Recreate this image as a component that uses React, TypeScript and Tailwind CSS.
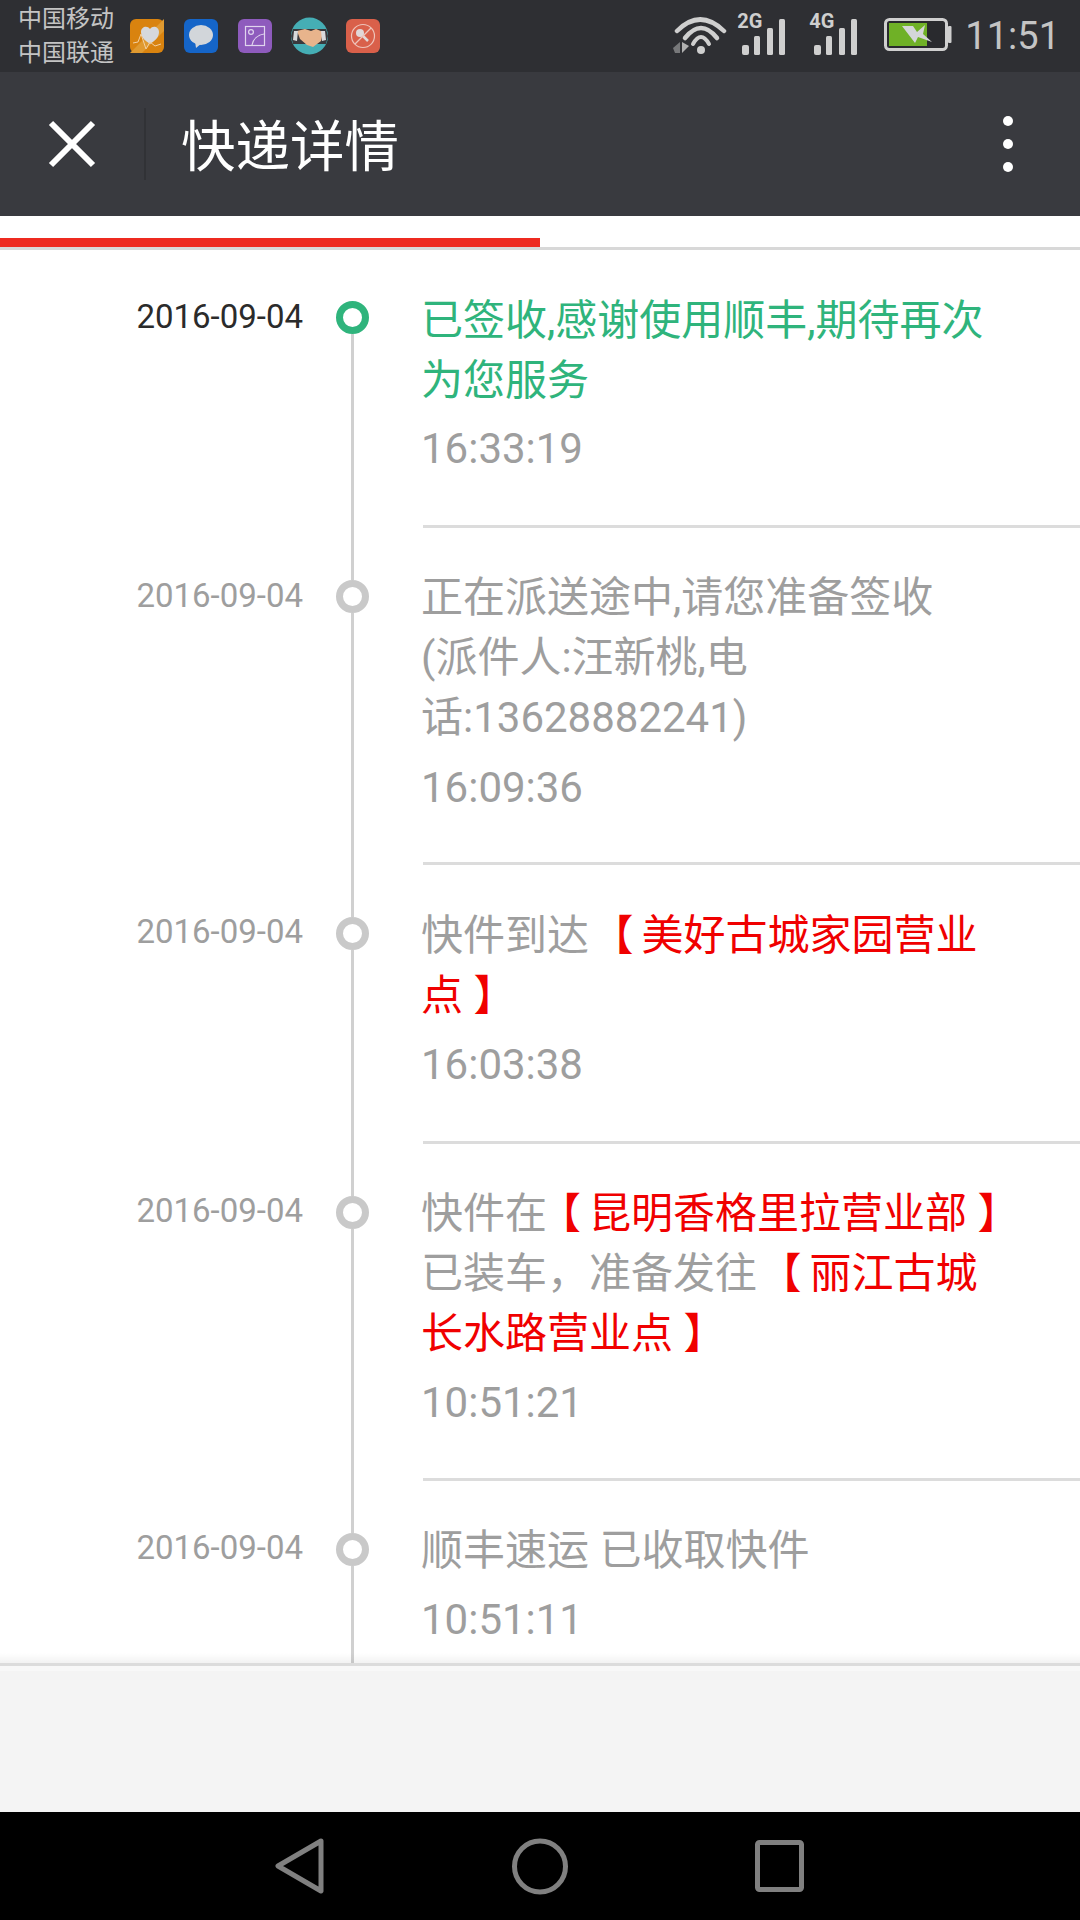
import React from "react";

const font = "font-['Roboto','Noto_Sans_CJK_SC',sans-serif]";

function Bars() {
  return (
    <svg width="43" height="36" viewBox="0 0 43 36" className="block">
      <rect x="0" y="26" width="7" height="10" rx="2" fill="#cfcfcf" />
      <rect x="12" y="17" width="6" height="19" rx="1.5" fill="#cfcfcf" />
      <rect x="25" y="9" width="6" height="27" rx="1.5" fill="#cfcfcf" />
      <rect x="37" y="0" width="6" height="36" rx="1.5" fill="#cfcfcf" />
    </svg>
  );
}

function StatusBar() {
  return (
    <div className={`flex h-[72px] shrink-0 items-center bg-[#2e2f33] ${font}`}>
      <div className="ml-[18px] w-[96px] text-[24px] leading-[34px] text-[#c4c4c4]">
        <div>中国移动</div>
        <div>中国联通</div>
      </div>
      <div className="ml-[16px] flex items-center">
        <svg width="34" height="34" viewBox="0 0 34 34" className="block">
          <rect width="34" height="34" rx="6" fill="#d9830f" />
          <path d="M0 34L34 0v12L12 34z" fill="#e09a30" />
          <path d="M20 25c-4-3-9-6-9-12 0-5 6-7 9-3 3-4 9-2 9 3 0 6-5 9-9 12z" fill="#d6d8dc" />
          <path d="M3 24l5-1 3-8 5 15 4-7 5 4 6-2" fill="none" stroke="#f2cfa0" strokeWidth="1" />
        </svg>
        <svg width="34" height="34" viewBox="0 0 34 34" className="ml-[20px] block">
          <rect width="34" height="34" rx="6" fill="#1565c8" />
          <ellipse cx="17" cy="16" rx="12" ry="10" fill="#d2d6da" />
          <path d="M11 22l1 7 6-5z" fill="#d2d6da" />
        </svg>
        <svg width="34" height="34" viewBox="0 0 34 34" className="ml-[20px] block">
          <rect width="34" height="34" rx="6" fill="#8e5bbd" />
          <rect x="7.5" y="7.5" width="19" height="19" fill="none" stroke="#e0d4ee" strokeWidth="1.2" />
          <circle cx="13" cy="13" r="2.4" fill="none" stroke="#e0d4ee" strokeWidth="1.2" />
          <path d="M14 26c1-6 6-10 12-11" fill="none" stroke="#e0d4ee" strokeWidth="1.2" />
        </svg>
        <svg width="37" height="38" viewBox="0 0 37 38" className="ml-[19px] block">
          <circle cx="18.5" cy="19" r="18.5" fill="#45aeb5" />
          <path d="M2 12h33l2 7-2 8H2l-2-8z" fill="#39393d" />
          <path d="M6 14l8-2 6 2 5-2 7 3-2 9-8 6-6-2-7-6z" fill="#e8b48c" />
          <path d="M3 14l4 0-1 10-4-1zM34 14l-4 0 1 10 4-1z" fill="#d8dadc" />
        </svg>
        <svg width="34" height="34" viewBox="0 0 34 34" className="ml-[18px] block">
          <rect width="34" height="34" rx="6" fill="#d9604a" />
          <circle cx="17" cy="17" r="11.5" fill="none" stroke="#eec4ba" strokeWidth="1.2" />
          <circle cx="14" cy="14" r="4" fill="#e0d8d8" />
          <path d="M16 16l6 6" stroke="#e0d8d8" strokeWidth="2.5" />
          <path d="M25 9L9 25" stroke="#eec4ba" strokeWidth="1.2" />
        </svg>
      </div>
      <div className="ml-auto flex items-center">
        <svg width="54" height="38" viewBox="0 0 54 38" className="block">
          <path d="M4 14Q27 -9 51 14" fill="none" stroke="#cfcfcf" strokeWidth="4.5" strokeLinecap="round" />
          <path d="M12 21Q28 1 44 21" fill="none" stroke="#cfcfcf" strokeWidth="4.5" strokeLinecap="round" />
          <path d="M20 27Q28 13 36 27" fill="none" stroke="#cfcfcf" strokeWidth="4" strokeLinecap="round" />
          <circle cx="28" cy="33" r="4" fill="#cfcfcf" />
          <path d="M0 31l7-6v11H2z" fill="#77787a" />
          <path d="M9 25v11l7-7z" fill="#b0b0b0" />
        </svg>
        <div className="relative mb-[5px] ml-[15px] h-[42px] w-[43px]">
          <span className="absolute left-[-5px] top-[-2px] text-[20px] leading-[20px] font-bold text-[#cfcfcf]">2G</span>
          <div className="absolute bottom-0 left-0"><Bars /></div>
        </div>
        <div className="relative mb-[5px] ml-[29px] h-[42px] w-[43px]">
          <span className="absolute left-[-5px] top-[-2px] text-[20px] leading-[20px] font-bold text-[#cfcfcf]">4G</span>
          <div className="absolute bottom-0 left-0"><Bars /></div>
        </div>
        <svg width="68" height="34" viewBox="0 0 68 34" className="mb-[2px] ml-[27px] block">
          <rect x="1.5" y="1.5" width="61" height="30" rx="4" fill="#292a2e" stroke="#cfcfcf" strokeWidth="3" />
          <rect x="5" y="5" width="38" height="23" fill="#6fb126" />
          <rect x="64" y="8" width="3.5" height="17" rx="1" fill="#cfcfcf" />
          <path d="M18 8h11l4 6 8-7-2 9 9 8-14-5-3 6z" fill="#d4d6d8" />
        </svg>
        <span className="ml-[13px] mr-[20px] text-[38px] leading-[44px] text-[#c4c4c4]">11:51</span>
      </div>
    </div>
  );
}

function Header() {
  return (
    <div className={`flex h-[144px] shrink-0 items-center bg-[#393a3f] ${font}`}>
      <svg width="48" height="48" viewBox="0 0 48 48" className="ml-[48px] block">
        <path d="M3 3l42 42M45 3L3 45" stroke="#fff" strokeWidth="6" fill="none" />
      </svg>
      <div className="ml-[48px] h-[72px] w-[2px] bg-[#313236]" />
      <div className="ml-[35px] pt-[5px] text-[54.5px] leading-[72px] text-white">快递详情</div>
      <div className="ml-auto mr-[67px] flex flex-col gap-[13px]">
        <div className="h-[10px] w-[10px] rounded-full bg-white" />
        <div className="h-[10px] w-[10px] rounded-full bg-white" />
        <div className="h-[10px] w-[10px] rounded-full bg-white" />
      </div>
    </div>
  );
}

function Progress() {
  return (
    <div className="h-[34px] shrink-0 bg-white pt-[22px]">
      <div className="h-[9px] w-1/2 bg-[#ee2a20]" />
      <div className="h-[3px] bg-[#d8d8d8]" />
    </div>
  );
}

const R = ({ children }: { children: React.ReactNode }) => <span className="text-[#f00000]">{children}</span>;
const Open = () => <span className="relative left-[-8px]">【</span>;

type Item = { time: string; body: React.ReactNode; date: string; pad: string; gap: string };

const items: Item[] = [
  {
    time: "16:33:19",
    date: "mt-[47px] text-[#2b2b2b]",
    pad: "pt-[41px] pb-[46px]",
    gap: "mt-[8px]",
    body: (
      <span className="text-[#2fb47c]">
        已签收,感谢使用顺丰,期待再次
        <br />
        为您服务
      </span>
    ),
  },
  {
    time: "16:09:36",
    date: "mt-[48px] text-[#9e9e9e]",
    pad: "pt-[40px] pb-[44px]",
    gap: "mt-[10px]",
    body: (
      <>
        正在派送途中,请您准备签收
        <br />
        (派件人:汪新桃,电
        <br />
        话:13628882241)
      </>
    ),
  },
  {
    time: "16:03:38",
    date: "mt-[47px] text-[#9e9e9e]",
    pad: "pt-[41px] pb-[46px]",
    gap: "mt-[9px]",
    body: (
      <>
        快件到达 <R><Open />美好古城家园营业</R>
        <br />
        <R>点 】</R>
      </>
    ),
  },
  {
    time: "10:51:21",
    date: "mt-[47px] text-[#9e9e9e]",
    pad: "pt-[40px] pb-[45px]",
    gap: "mt-[9px]",
    body: (
      <>
        快件在<R><Open />昆明香格里拉营业部 】</R>
        <br />
        已装车，准备发往 <R><Open />丽江古城</R>
        <br />
        <R>长水路营业点 】</R>
      </>
    ),
  },
  {
    time: "10:51:11",
    date: "mt-[47px] text-[#9e9e9e]",
    pad: "pt-[40px] pb-[45px]",
    gap: "mt-[9px]",
    body: <>顺丰速运 已收取快件</>,
  },
];

function Row({ item, index }: { item: Item; index: number }) {
  const first = index === 0;
  return (
    <div className="flex">
      <div className="w-[303px] shrink-0 text-right">
        <div className={`text-[33px] leading-[40px] ${item.date}`}>2016-09-04</div>
      </div>
      <div className="ml-[33px] flex w-[33px] shrink-0 flex-col items-center">
        <div className={`w-[3px] ${first ? "h-[51px] bg-transparent" : "h-[52px] bg-[#d0d0d0]"}`} />
        <div className={`h-[33px] w-[33px] shrink-0 rounded-full border-[7px] bg-white ${first ? "border-[#2fb47c]" : "border-[#c9c9c9]"}`} />
        <div className="w-[3px] flex-1 bg-[#d0d0d0]" />
      </div>
      <div className={`ml-[54px] flex-1 border-b-[3px] border-[#dcdcdc] text-[42px] leading-[60px] text-[#9e9e9e] ${item.pad}`}>
        <div className="ml-[-2px] whitespace-nowrap">{item.body}</div>
        <div className={`ml-[-2px] ${item.gap}`}>{item.time}</div>
      </div>
    </div>
  );
}

function Footer() {
  return (
    <div className="relative h-[149px] shrink-0 border-t-[3px] border-[#dcdcdc] bg-[#f4f4f4]">
      <div className="absolute left-0 right-0 top-[-13px] h-[10px] bg-gradient-to-b from-transparent to-black/5" />
      <div className="h-[5px] bg-[#f8f8f8]" />
    </div>
  );
}

function NavBar() {
  return (
    <div className="flex h-[108px] shrink-0 items-center bg-black">
      <svg width="49" height="56" viewBox="0 0 49 56" className="ml-[275px] block">
        <path d="M46 3L3 28l43 25z" fill="none" stroke="#808080" strokeWidth="5" strokeLinejoin="round" />
      </svg>
      <svg width="56" height="57" viewBox="0 0 56 57" className="ml-[188px] block">
        <circle cx="28" cy="28.5" r="25.5" fill="none" stroke="#808080" strokeWidth="5" />
      </svg>
      <svg width="49" height="52" viewBox="0 0 49 52" className="ml-[187px] block">
        <rect x="2.5" y="2.5" width="44" height="47" rx="2" fill="none" stroke="#808080" strokeWidth="5" />
      </svg>
    </div>
  );
}

export default function App() {
  return (
    <div className={`flex h-[1920px] w-[1080px] flex-col overflow-hidden bg-white ${font}`}>
      <StatusBar />
      <Header />
      <Progress />
      <div className="min-h-0 flex-1 overflow-hidden">
        {items.map((it, i) => (
          <Row key={i} item={it} index={i} />
        ))}
      </div>
      <Footer />
      <NavBar />
    </div>
  );
}
